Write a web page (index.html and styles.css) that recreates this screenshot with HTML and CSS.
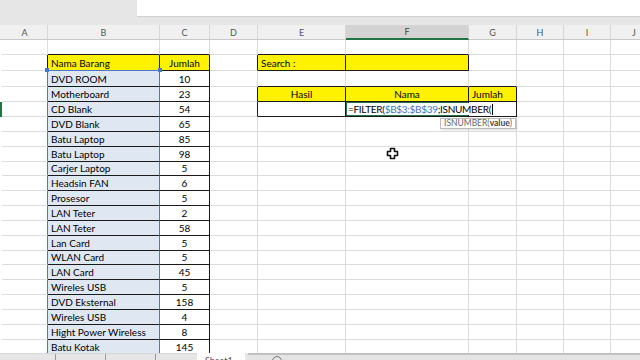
FILE: index.html
```html
<!DOCTYPE html>
<html lang="id">
<head>
    <meta charset="UTF-8">
    <meta name="viewport" content="width=device-width, initial-scale=1.0">
    <title>Filter - Daftar Barang</title>
    <link rel="stylesheet" href="styles.css">
</head>
<body>
    <div class="formula-row">
        <div class="name-box"></div>
        <div class="formula-input"></div>
    </div>
    <div class="band"></div>
    <div class="sheet">
        <div id="grid" class="grid">
            <!-- cells are generated by script.js -->
        </div>
        <svg class="cursor" width="13" height="13" viewBox="0 0 13 13">
            <path d="M4.5 1.5h4v3h3v4h-3v3h-4v-3h-3v-4h3z" fill="#fff" stroke="#111" stroke-width="1.6" stroke-linejoin="round"/>
        </svg>
    </div>
    <div class="tabs">
        <div class="tab-nav">
            <span class="sep"></span>
            <span class="sep"></span>
            <span class="sep"></span>
        </div>
        <div class="tab">Sheet1</div>
        <div class="scroll">
            <span class="add"></span>
        </div>
    </div>
    <script src="script.js"></script>
</body>
</html>
```

FILE: styles.css
```css
body {
    margin: 0;
    width: 640px;
    height: 360px;
    overflow: hidden;
    display: flex;
    flex-direction: column;
    background-color: #fff;
    font-family: Lato, "Liberation Sans", Arial, sans-serif;
    color: #000;
}

.formula-row {
    height: 17px;
    display: flex;
    flex-shrink: 0;
}

.name-box {
    width: 137px;
    background-color: #e6e6e6;
}

.formula-input {
    flex: 1;
    background-color: #fff;
    border-bottom: 1px solid #d0d0d0;
}

.band {
    height: 8px;
    flex-shrink: 0;
    background-color: #e6e6e6;
}

.sheet {
    flex: 1;
    overflow: hidden;
    position: relative;
}

.grid {
    display: grid;
    grid-template-columns: 2px 46px 112px 50px 48px 88px 123px 48px 47px 47px 47px;
    grid-template-rows: 15px 15px 16px 16px 15px 15px repeat(16, 14.85px);
}

/* column letters */
.col-head {
    box-sizing: border-box;
    background-color: #f0f0f0;
    border-right: 1px solid #d6d6d6;
    border-bottom: 1px solid #c8c8c8;
    font-size: 9px;
    color: #555;
    display: flex;
    align-items: center;
    justify-content: center;
}

.col-head.active {
    background-color: #d3d3d3;
    border-bottom: 2px solid #217346;
    color: #444;
}

.corner {
    background-color: #f0f0f0;
    border-bottom: 1px solid #c8c8c8;
}

.row-head.active {
    background-color: #217346;
}

/* cells */
.cell {
    box-sizing: border-box;
    border-right: 1px solid #dcdcdc;
    border-bottom: 1px solid #dcdcdc;
    font-size: 10px;
    line-height: 12px;
    padding: 0 3px 1px;
    display: flex;
    align-items: flex-end;
    white-space: nowrap;
    position: relative;
}

.cell.br {
    border-right-color: #1a1a1a;
}

.cell.bb {
    border-bottom-color: #1a1a1a;
}

.cell.blue-r {
    border-right-color: #4a78c8;
}

.cell.blue-b {
    border-bottom-color: #4a78c8;
}

.cell.head {
    background-color: #fff200;
}

.cell.center {
    justify-content: center;
}

.cell.range {
    background-color: #dfe7f3;
}

.cell.range-top::before,
.cell.range-top::after {
    content: "";
    position: absolute;
    top: -3px;
    width: 4px;
    height: 4px;
    background-color: #4a78c8;
}

.cell.range-top::before {
    left: -3px;
}

.cell.range-top::after {
    right: -3px;
}

.cell.editing {
    box-shadow: inset 0 0 0 1px #217346;
    z-index: 2;
    padding-left: 2px;
}

.editor {
    background-color: #fff;
    padding-right: 2px;
    letter-spacing: -0.3px;
}

.editor .ref {
    color: #3f6fc0;
}

.caret {
    display: inline-block;
    width: 1px;
    height: 11px;
    margin-left: 1px;
    vertical-align: -2px;
    background-color: #000;
}

.tip {
    position: absolute;
    left: 94px;
    top: 16px;
    height: 11px;
    padding: 0 3px;
    box-sizing: border-box;
    background-color: #fff;
    border: 1px solid #bcbcbc;
    box-shadow: 1px 1px 2px rgba(0, 0, 0, 0.15);
    font-size: 8.5px;
    line-height: 9px;
    color: #666;
}

.tip b {
    color: #444;
}

.cursor {
    position: absolute;
    left: 386px;
    top: 122px;
}

/* sheet tabs */
.tabs {
    height: 7px;
    flex-shrink: 0;
    display: flex;
    background-color: #e6e6e6;
    overflow: hidden;
}

.tab-nav {
    width: 197px;
    box-sizing: border-box;
    border-top: 1px solid #d6d6d6;
    display: flex;
    padding-left: 55px;
    gap: 49px;
}

.sep {
    width: 1px;
    height: 6px;
    background-color: #9a9a9a;
}

.tab {
    width: 48px;
    background-color: #fff;
    font-size: 9px;
    line-height: 9px;
    padding-top: 3px;
    padding-left: 8px;
    box-sizing: border-box;
    color: #555;
}

.scroll {
    flex: 1;
    box-sizing: border-box;
    border-top: 2px solid #c2c2c2;
    margin-left: 3px;
    background-color: #e4e4e4;
    padding-left: 24px;
}

.add {
    display: block;
    width: 8px;
    height: 8px;
    border: 1px solid #777;
    border-radius: 50%;
    margin-top: 1px;
}
```

FILE: script.js
```js
const letters = ['', 'A', 'B', 'C', 'D', 'E', 'F', 'G', 'H', 'I', 'J'];
const lastRow = 21;

const items = [
    ['DVD ROOM', 10], ['Motherboard', 23], ['CD Blank', 54], ['DVD Blank', 65],
    ['Batu Laptop', 85], ['Batu Laptop', 98], ['Carjer Laptop', 5], ['Headsin FAN', 6],
    ['Prosesor', 5], ['LAN Teter', 2], ['LAN Teter', 58], ['Lan Card', 5],
    ['WLAN Card', 5], ['LAN Card', 45], ['Wireles USB', 5], ['DVD Eksternal', 158],
    ['Wireles USB', 4], ['Hight Power Wireless', 8], ['Batu Kotak', 145]
];

const cells = {
    B2: { text: 'Nama Barang', cls: 'head blue-b' },
    C2: { text: 'Jumlah', cls: 'head center' },
    E2: { text: 'Search :', cls: 'head' },
    F2: { text: '', cls: 'head' },
    E4: { text: 'Hasil', cls: 'head center' },
    F4: { text: 'Nama', cls: 'head center' },
    G4: { text: 'Jumlah', cls: 'head' },
    F5: {
        html: '<span class="editor">=FILTER(<span class="ref">$B$3:$B$39</span>;ISNUMBER(<span class="caret"></span></span>' +
              '<div class="tip">ISNUMBER(<b>value</b>)</div>',
        cls: 'editing'
    }
};

items.forEach((item, i) => {
    cells['B' + (i + 3)] = { text: item[0], cls: 'range' + (i === 0 ? ' range-top' : '') };
    cells['C' + (i + 3)] = { text: item[1], cls: 'center' };
});

// blocks with black "all borders": [first col, first row, last col, last row]
const boxes = [[2, 2, 3, 21], [5, 2, 6, 2], [5, 4, 7, 5]];

function isBordered(r, c) {
    return boxes.some(b => c >= b[0] && c <= b[2] && r >= b[1] && r <= b[3]);
}

function createSheet() {
    let grid = document.getElementById('grid');
    for (let r = 0; r <= lastRow; r++) {
        for (let c = 0; c < letters.length; c++) {
            let el = document.createElement('div');
            if (r === 0) {
                el.className = c === 0 ? 'corner' : 'col-head';
                if (letters[c] === 'F') el.classList.add('active');
                el.textContent = letters[c];
            } else if (c === 0) {
                el.className = 'row-head';
                if (r === 5) el.classList.add('active');
            } else {
                let data = cells[letters[c] + r] || {};
                el.className = 'cell';
                if (isBordered(r, c) || isBordered(r, c + 1)) el.classList.add('br');
                if (isBordered(r, c) || isBordered(r + 1, c)) el.classList.add('bb');
                if ((c === 1 || c === 2) && r >= 3) el.classList.add('blue-r');
                if (data.cls) el.classList.add(...data.cls.split(' '));
                if (data.html) {
                    el.innerHTML = data.html;
                } else if (data.text !== undefined) {
                    el.textContent = data.text;
                }
            }
            grid.appendChild(el);
        }
    }
}

createSheet();
```
